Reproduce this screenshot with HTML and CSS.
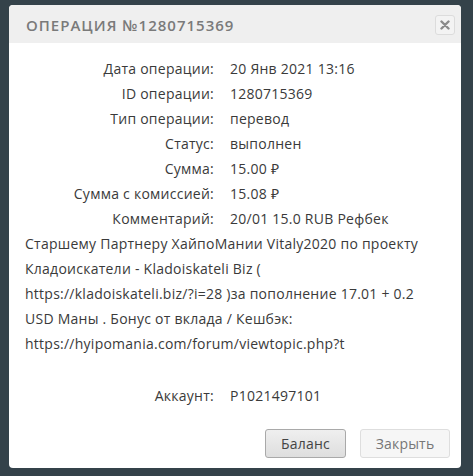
FILE: index.html
```html
<!DOCTYPE html>
<html lang="ru">
<head>
<meta charset="utf-8">
<link rel="stylesheet" href="styles.css">
</head>
<body>
<div class="dialog">
  <div class="head">
    <div class="title">ОПЕРАЦИЯ №1280715369</div>
    <button class="close" aria-label="close">
      <svg width="10" height="10" viewBox="0 0 10 10"><path d="M1.5 1.5 L8.5 8.5 M8.5 1.5 L1.5 8.5" stroke="#8a8a8a" stroke-width="2.4" stroke-linecap="round"/></svg>
    </button>
  </div>
  <div class="body">
    <div class="row"><span class="lab">Дата операции:</span><span class="val">20 Янв 2021 13:16</span></div>
    <div class="row"><span class="lab">ID операции:</span><span class="val">1280715369</span></div>
    <div class="row"><span class="lab">Тип операции:</span><span class="val">перевод</span></div>
    <div class="row"><span class="lab">Статус:</span><span class="val">выполнен</span></div>
    <div class="row"><span class="lab">Сумма:</span><span class="val">15.00 ₽</span></div>
    <div class="row"><span class="lab">Сумма с комиссией:</span><span class="val">15.08 ₽</span></div>
    <div class="comment"><span class="lab">Комментарий:</span><span class="val">20/01 15.0 RUB Рефбек</span><br>Старшему Партнеру ХайпоМании Vitaly2020 по проекту<br>Кладоискатели - Kladoiskateli Biz (<br>https://kladoiskateli.biz/?i=28 )за пополнение 17.01 + 0.2<br>USD Маны . Бонус от вклада / Кешбэк:<br>https://hyipomania.com/forum/viewtopic.php?t</div>
    <div class="row account"><span class="lab">Аккаунт:</span><span class="val">P1021497101</span></div>
  </div>
  <div class="foot">
    <button class="btn primary">Баланс</button>
    <button class="btn">Закрыть</button>
  </div>
</div>
</body>
</html>
```
FILE: styles.css
```css
html, body {
  margin: 0;
  padding: 0;
}
body {
  background: #34424a;
  width: 473px;
  height: 476px;
  overflow: hidden;
  font-family: "Open Sans", "Liberation Sans", sans-serif;
  color: #3a3a3a;
}
.dialog {
  margin: 5px 0 0 9px;
  width: 452px;
  height: 463px;
  background: #fff;
  border-radius: 4px;
  overflow: hidden;
  display: flex;
  flex-direction: column;
}
.head {
  height: 38px;
  background: #efefef;
  display: flex;
  align-items: center;
  justify-content: space-between;
  padding: 0 6px 0 17px;
  flex: none;
}
.title {
  font-family: "Open Sans", "Liberation Sans", sans-serif;
  font-weight: 600;
  font-size: 15px;
  letter-spacing: 1px;
  color: #7a7a7a;
  margin-top: 1px;
}
.close {
  width: 20px;
  height: 20px;
  padding: 0;
  border: 1px solid #dcdcdc;
  border-radius: 3px;
  background: #f3f3f3;
  display: flex;
  align-items: center;
  justify-content: center;
  margin-top: 2px;
}
.body {
  padding: 13px 0 0 16px;
  font-size: 14px;
  line-height: 25px;
  letter-spacing: 0.25px;
  flex: 1;
}
.row {
  display: flex;
}
.lab {
  display: inline-block;
  width: 189px;
  text-align: right;
  margin-right: 16px;
}
.val {
  color: #3a3a3a;
}
.comment {
  padding-right: 10px;
  white-space: nowrap;
}
.account {
  margin-top: 27px;
}
.foot {
  display: flex;
  justify-content: flex-end;
  gap: 14px;
  padding: 0 11px 10px 0;
  flex: none;
}
.btn {
  width: 90px;
  height: 29px;
  font-family: "Open Sans", "Liberation Sans", sans-serif;
  font-size: 14px;
  letter-spacing: 0.2px;
  color: #777;
  background: #f6f6f6;
  border: 1px solid #dedede;
  border-radius: 3px;
  padding: 0;
}
.btn.primary {
  width: 81px;
  color: #444;
  background: linear-gradient(#efefef, #dedede);
  border-color: #a9a9a9;
}
```
